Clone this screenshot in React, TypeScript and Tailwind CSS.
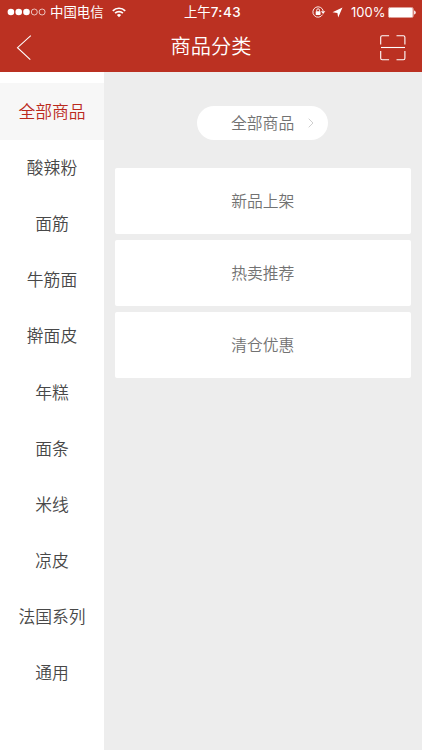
import React from 'react'

interface CategoryItemProps {
  label: string;
  active?: boolean;
}

const categories = [
  '全部商品',
  '酸辣粉',
  '面筋',
  '牛筋面',
  '擀面皮',
  '年糕',
  '面条',
  '米线',
  '凉皮',
  '法国系列',
  '通用',
]

const groups = ['新品上架', '热卖推荐', '清仓优惠']

const StatusBar: React.FC = () => {
  return (
    <div className="relative flex h-6 items-center justify-between pl-[7px] pr-[6px] text-[13.4px] leading-6">
      <div className="flex items-center">
        <svg width="39" height="8" viewBox="0 0 39 8" fill="#fff" stroke="#fff">
          <circle cx="3.9" cy="4" r="3.3" stroke="none" />
          <circle cx="11.7" cy="4" r="3.3" stroke="none" />
          <circle cx="19.5" cy="4" r="3.3" stroke="none" />
          <circle cx="27.3" cy="4" r="3" fill="none" strokeWidth="0.7" />
          <circle cx="35.1" cy="4" r="3" fill="none" strokeWidth="0.7" />
        </svg>
        <span className="ml-1">中国电信</span>
        <svg className="ml-2" width="14" height="11" viewBox="0 0 14 11" fill="none" stroke="#fff" strokeWidth="1.7">
          <path d="M0.8 3.8a8.8 8.8 0 0 1 12.4 0" />
          <path d="M3.1 6.2a5.5 5.5 0 0 1 7.8 0" />
          <path d="M7 10.2 4.9 8.1a3 3 0 0 1 4.2 0z" fill="#fff" stroke="none" />
        </svg>
      </div>
      <div className="absolute inset-x-0 pl-[3px] text-center">
        上午<span className="font-medium tracking-[0.5px]">7:43</span>
      </div>
      <div className="flex items-center">
        <svg width="14" height="12" viewBox="0 0 14 12" fill="none" stroke="#fff">
          <path d="M10.6 8.6A5.2 5.2 0 1 1 11.2 5" strokeWidth="0.9" />
          <path d="M8.9 5.2h4.4l-2.2 2.7z" fill="#fff" stroke="none" />
          <rect x="3.7" y="5.3" width="4.8" height="3.6" rx="0.4" fill="#fff" stroke="none" />
          <path d="M4.7 5.5V4.2a1.4 1.4 0 0 1 2.8 0v1.3" strokeWidth="0.9" />
        </svg>
        <svg className="ml-[6px]" width="11" height="11" viewBox="0 0 11 11" fill="#fff">
          <path d="M10.5 0.5 6.2 10.5 5.4 6 0.5 5.3z" />
        </svg>
        <span className="ml-[8px] w-[34px] text-[13px]">100%</span>
        <svg className="ml-[3px]" width="28" height="11" viewBox="0 0 28 11">
          <rect x="0.4" y="0.4" width="24.8" height="10.2" rx="1.8" fill="none" stroke="#fff" strokeWidth="0.6" />
          <rect x="0.9" y="0.9" width="23.8" height="9.2" rx="1.2" fill="#fff" />
          <path d="M26.1 3.4c2.2 0.7 2.2 3.5 0 4.2z" fill="#fff" />
        </svg>
      </div>
    </div>
  )
}

const NavBar: React.FC = () => {
  return (
    <div className="flex h-12 items-center justify-between pl-4 pr-4">
      <svg className="w-[26px]" width="26" height="26" viewBox="0 0 26 26" fill="none" stroke="#fff" strokeWidth="1.1">
        <path d="M14.8 0.6 1.5 12.7l12.8 12" />
      </svg>
      <h1 className="pb-[2px] text-[20.2px] font-[350] leading-7">商品分类</h1>
      <svg width="26" height="26" viewBox="0 0 26 26" fill="none" stroke="#fff" strokeWidth="1.1">
        <path d="M0.7 9.5V2.2Q0.7 0.7 2.2 0.7H9.1M16.5 0.7h6.9q1.5 0 1.5 1.5v7.3M24.9 16v7.3q0 1.5-1.5 1.5h-6.9M9.1 24.8H2.2q-1.5 0-1.5-1.5v-7.3" />
        <path d="M1 12.5h24" />
      </svg>
    </div>
  )
}

const CategoryItem: React.FC<CategoryItemProps> = ({ label, active }) => {
  return (
    <li
      className={`flex h-[56.2px] items-center justify-center pt-[1.4px] text-[16.8px] ${
        active ? 'bg-[#f7f7f7] text-[#bb2a1c]' : 'text-[#484848]'
      }`}
    >
      {label}
    </li>
  )
}

export default function App() {
  return (
    <div className="flex h-[750px] w-[422px] flex-col overflow-hidden bg-[#ededed] font-['Inter','Noto_Sans_CJK_SC',sans-serif]">
      <header className="h-[72px] shrink-0 bg-[#bb3122] text-white">
        <StatusBar />
        <NavBar />
      </header>
      <div className="flex flex-1">
        <ul className="w-[104px] bg-white pt-[11.4px] font-[350]">
          {categories.map((label, i) => (
            <CategoryItem key={label} label={label} active={i === 0} />
          ))}
        </ul>
        <main className="flex flex-1 flex-col pl-[11px] pr-[11.5px] pt-[34px] text-[15.8px] font-[350] text-[#727272]">
          <button className="ml-[82px] flex h-[33.5px] w-[131px] items-center rounded-full bg-white pl-[34px]">
            <span className="pt-[2px]">全部商品</span>
            <svg className="ml-[14px]" width="6" height="10" viewBox="0 0 6 10" fill="none" stroke="#cfcfcf">
              <path d="M0.7 0.7 5 5 0.7 9.3" />
            </svg>
          </button>
          <div className="mt-[28.3px] flex flex-col gap-[5.8px]">
            {groups.map((label) => (
              <div key={label} className="flex h-[66.1px] items-center justify-center rounded-[2px] bg-white pt-[1.6px]">
                {label}
              </div>
            ))}
          </div>
        </main>
      </div>
    </div>
  )
}
